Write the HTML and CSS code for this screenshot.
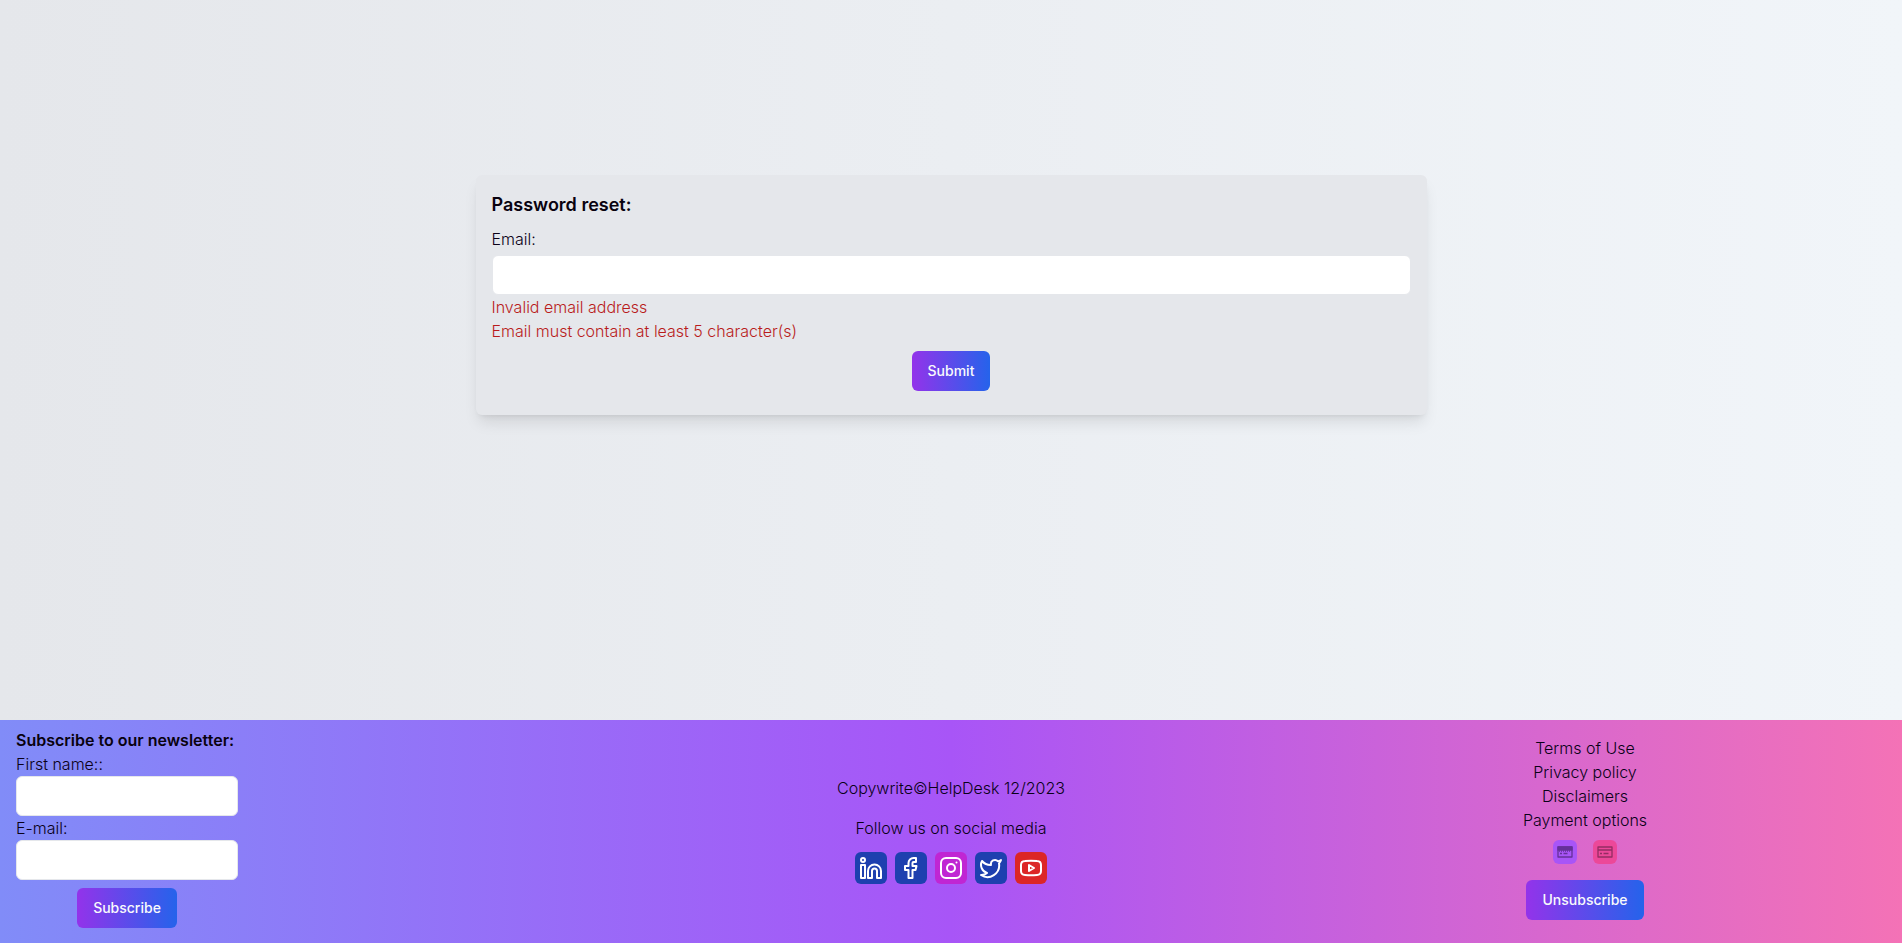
FILE: index.html
```html
<!DOCTYPE html>
<html lang="en">
<head>
    <meta charset="UTF-8">
    <meta name="viewport" content="width=device-width, initial-scale=1.0">
    <title>HelpDesk - Password reset</title>
    <link rel="stylesheet" href="styles.css">
</head>
<body>
    <main>
        <form class="reset-card">
            <h1>Password reset:</h1>
            <label for="email">Email:</label>
            <input type="email" id="email" name="email">
            <p class="error">Invalid email address</p>
            <p class="error">Email must contain at least 5 character(s)</p>
            <button type="submit" class="btn">Submit</button>
        </form>
    </main>

    <footer>
        <form class="newsletter">
            <h2>Subscribe to our newsletter:</h2>
            <label for="first-name">First name::</label>
            <input type="text" id="first-name" name="first_name">
            <label for="newsletter-email">E-mail:</label>
            <input type="email" id="newsletter-email" name="newsletter_email">
            <button type="submit" class="btn">Subscribe</button>
        </form>

        <div class="social">
            <p>Copywrite©HelpDesk 12/2023</p>
            <p>Follow us on social media</p>
            <div class="social-links">
                <a href="#" class="blue" aria-label="LinkedIn">
                    <svg viewBox="0 0 24 24"><circle cx="4" cy="4" r="2"/><path d="M2 9h4v13H2z"/><path d="M9 22v-7a6.5 6.5 0 0 1 13 0v7h-4v-7a2.5 2.5 0 0 0-5 0v7z"/></svg>
                </a>
                <a href="#" class="blue" aria-label="Facebook">
                    <svg viewBox="0 0 24 24"><path d="M17 2h-2.5a5 5 0 0 0-5 5v3H6v4h3.500v8h4v-8h3l1-4h-4V7a1 1 0 0 1 1-1H17z"/></svg>
                </a>
                <a href="#" class="fuchsia" aria-label="Instagram">
                    <svg viewBox="0 0 24 24"><rect x="2" y="2" width="20" height="20" rx="5"/><circle cx="12" cy="12" r="4"/><path d="M17.5 6.5h.01"/></svg>
                </a>
                <a href="#" class="blue" aria-label="Twitter">
                    <svg viewBox="0 0 24 24"><path d="M22 4s-.7 2.1-2 3.4c1.6 10-9.4 17.300-18 11.600 2.200.1 4.400-.6 6-2C3 15.500.5 9.600 3 5c2.200 2.600 5.600 4.100 9 4-.9-4.200 4-6.600 7-3.800 1.100 0 3-1.200 3-1.200z"/></svg>
                </a>
                <a href="#" class="red" aria-label="YouTube">
                    <svg viewBox="0 0 24 24"><path d="M6 5Q12 4.500 18 5q4 .2 4 4v6q0 3.800-4 4-6 .5-12 0-4-.2-4-4V9q0-3.800 4-4z"/><path d="M10 9l5 3-5 3z"/></svg>
                </a>
            </div>
        </div>

        <div class="links">
            <a href="#">Terms of Use</a>
            <a href="#">Privacy policy</a>
            <a href="#">Disclaimers</a>
            <a href="#">Payment options</a>
            <div class="cards">
                <span class="purple">
                    <svg viewBox="0 0 16 16"><path class="solid" d="M1 3h14v3H1z"/><path d="M1 3h14v10H1z"/><path stroke-dasharray="1 1" d="M2 7h12"/><path d="M3 9.5h2M6.500 9.500h4"/></svg>
                </span>
                <span class="pink">
                    <svg viewBox="0 0 16 16"><path d="M1 3h14v10H1zM1 6h14"/><path d="M3 9.500h2M6.500 9.500h5"/></svg>
                </span>
            </div>
            <button type="button" class="btn">Unsubscribe</button>
        </div>
    </footer>
</body>
</html>
```

FILE: styles.css
```css
* {
    box-sizing: border-box;
}
body {
    margin: 0;
    min-height: 100vh;
    display: flex;
    flex-direction: column;
    font-family: Inter, sans-serif;
    font-size: 16px;
    font-weight: 300;
    line-height: 24px;
    color: #0a0118;
}
h1, h2, p {
    margin: 0;
}
h1, h2 {
    font-weight: 600;
    color: #09020f;
}
a {
    color: inherit;
    text-decoration: none;
}
label {
    display: block;
}
input {
    display: block;
    width: 100%;
    height: 40px;
    padding: 8px 12px;
    border: 1px solid #e5e7eb;
    border-radius: 6px;
    background: white;
    font: inherit;
}
main {
    flex: 1;
    padding: 175px 16px 64px;
    background: linear-gradient(to right, #e5e7eb, #f1f5f9);
}
.reset-card {
    display: flex;
    flex-direction: column;
    width: 50vw;
    margin: 0 auto;
    padding: 16px 16px 24px;
    border-radius: 6px;
    background: #e5e7eb;
    box-shadow: 0 10px 15px -3px rgba(0, 0, 0, 0.1), 0 4px 6px -4px rgba(0, 0, 0, 0.1);
}
h1 {
    font-size: 18px;
    line-height: 28px;
    margin-bottom: 8px;
}
.reset-card label {
    margin-bottom: 4px;
}
.error {
    color: #b91c1c;
}
.btn {
    align-self: center;
    height: 40px;
    margin-top: 8px;
    padding: 0 16px;
    border: none;
    border-radius: 6px;
    background: linear-gradient(to right, #9333ea, #2563eb);
    color: #f8fafc;
    font-family: inherit;
    font-size: 14px;
    font-weight: 500;
    line-height: 20px;
    cursor: pointer;
}
footer {
    display: grid;
    grid-template-columns: repeat(3, 1fr);
    align-items: center;
    padding: 8px 0 15px;
    background: linear-gradient(to right, #818cf8, #a855f7, #f472b6);
}
h2 {
    font-size: 16px;
    line-height: 24px;
    white-space: nowrap;
}
.newsletter {
    display: flex;
    flex-direction: column;
    width: 222px;
    margin-left: 16px;
}
.social, .links {
    display: flex;
    flex-direction: column;
    align-items: center;
}
.social {
    gap: 16px;
    padding-top: 4px;
}
.social-links {
    display: flex;
    gap: 8px;
    margin-top: -4px;
}
.social-links a {
    padding: 4px;
    border-radius: 6px;
}
svg {
    display: block;
    fill: none;
    stroke: currentColor;
    stroke-linecap: round;
    stroke-linejoin: round;
}
.social-links svg {
    width: 24px;
    height: 24px;
    color: white;
    stroke-width: 2;
}
.blue {
    background: #1e40af;
}
.fuchsia {
    background: #c026d3;
}
.red {
    background: #dc2626;
}
.cards {
    display: flex;
    gap: 16px;
    margin: 8px 0;
}
.cards span {
    padding: 4px;
    border-radius: 6px;
}
.cards svg {
    width: 16px;
    height: 16px;
    stroke-width: 1.3;
    stroke-linecap: butt;
}
.solid {
    fill: currentColor;
}
.purple {
    background: #a855f7;
    color: #65309b;
}
.pink {
    background: #ec4899;
    color: #942c63;
}
```
